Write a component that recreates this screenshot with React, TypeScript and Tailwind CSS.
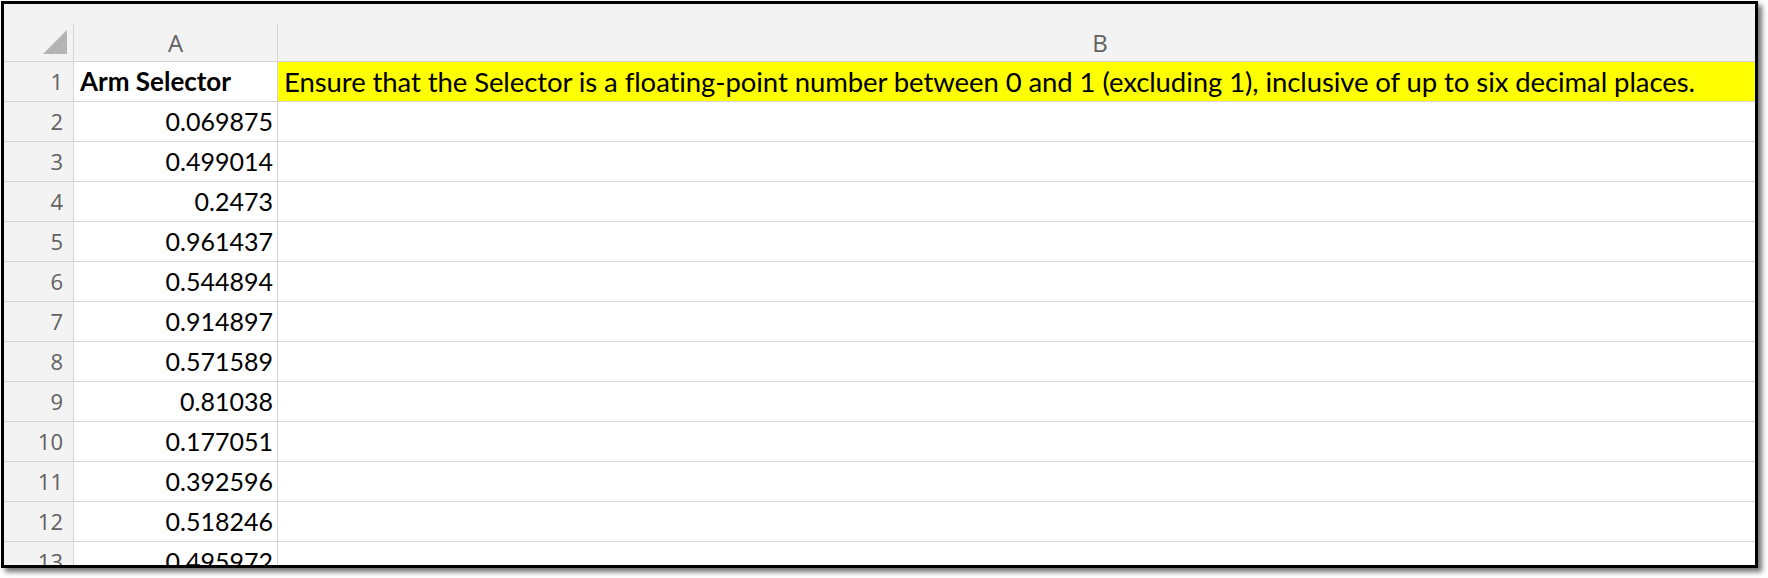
const values = [
  "0.069875",
  "0.499014",
  "0.2473",
  "0.961437",
  "0.544894",
  "0.914897",
  "0.571589",
  "0.81038",
  "0.177051",
  "0.392596",
  "0.518246",
  "0.495972",
];

function RowNum({ n }: { n: number }) {
  return (
    <div className="w-[70px] shrink-0 h-full bg-[#f3f3f3] border-r border-[#d4d4d4] flex items-center justify-end pr-[10px] text-[22px] text-[#616161] font-['Open_Sans',sans-serif]">
      {n}
    </div>
  );
}

export default function App() {
  return (
    <div className="w-[1768px] h-[578px] bg-white pl-[1px] pt-[1px]">
      <div className="w-[1757px] h-[567px] border-[3px] border-black overflow-hidden bg-white shadow-[4px_4px_5px_rgba(0,0,0,0.55)]">
        {/* column headers */}
        <div className="h-[58px] bg-[#f3f3f3] border-b border-[#d4d4d4] pt-[20px] flex text-[24px] text-[#616161] font-['Open_Sans',sans-serif]">
          <div className="w-[70px] shrink-0 border-r border-[#d4d4d4] flex items-start pl-[39px] pt-[6px]">
            <svg width="24" height="24" viewBox="0 0 24 24">
              <polygon points="24,0 24,24 0,24" fill="#b4b4b4" />
            </svg>
          </div>
          <div className="w-[204px] shrink-0 border-r border-[#d4d4d4] flex items-center justify-center">
            A
          </div>
          <div className="w-[1644px] shrink-0 flex items-center justify-center">B</div>
        </div>

        {/* row 1 */}
        <div className="h-[40px] flex border-b border-[#d4d4d4] font-['Lato',sans-serif] text-black">
          <RowNum n={1} />
          <div className="w-[204px] shrink-0 border-r border-[#d4d4d4] flex items-center pl-[6px] font-bold text-[26px]">
            Arm Selector
          </div>
          <div className="flex-1 bg-[#ffff00] flex items-center pl-[6px] whitespace-nowrap text-[27.5px] tracking-[-0.08px]">
            Ensure that the Selector is a floating-point number between 0 and 1 (excluding 1), inclusive of up to six decimal places.
          </div>
        </div>

        {values.map((v, i) => (
          <div
            key={i}
            className="h-[40px] flex border-b border-[#d4d4d4] font-['Lato',sans-serif] text-[25px] text-black"
          >
            <RowNum n={i + 2} />
            <div className="w-[204px] shrink-0 border-r border-[#d4d4d4] flex items-center justify-end pr-[4px]">
              {v}
            </div>
            <div className="flex-1" />
          </div>
        ))}
      </div>
    </div>
  );
}
